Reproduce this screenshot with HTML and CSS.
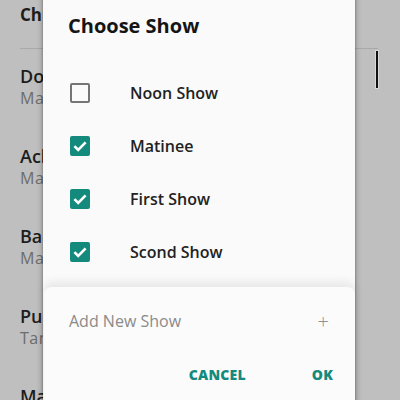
FILE: index.html
```html
<!DOCTYPE html>
<html>
<head>
<meta charset="utf-8">
<link rel="stylesheet" href="styles.css">
</head>
<body>
<div class="screen">
  <div class="bg">
    <div class="bg-header">
      <span class="bg-title">Ch</span>
    </div>
    <div class="bg-search"><span class="cursor"></span></div>
    <div class="bg-list">
      <div class="bg-item"><div class="bg-name">Do</div><div class="bg-sub">Mal</div></div>
      <div class="bg-item"><div class="bg-name">Ach</div><div class="bg-sub">Mal</div></div>
      <div class="bg-item"><div class="bg-name">Bah</div><div class="bg-sub">Mal</div></div>
      <div class="bg-item"><div class="bg-name">Pul</div><div class="bg-sub">Tam</div></div>
      <div class="bg-item"><div class="bg-name">Ma</div><div class="bg-sub">Mal</div></div>
    </div>
  </div>

  <div class="dialog">
    <div class="dialog-title">Choose Show</div>
    <div class="options">
      <div class="option">
        <span class="box"></span>
        <span class="label">Noon Show</span>
      </div>
      <div class="option">
        <span class="box checked"><svg viewBox="0 0 20 20" width="20" height="20"><path d="M4.4 10.1l3.8 3.8 7.4-7.6" fill="none" stroke="#fff" stroke-width="2.6"/></svg></span>
        <span class="label">Matinee</span>
      </div>
      <div class="option">
        <span class="box checked"><svg viewBox="0 0 20 20" width="20" height="20"><path d="M4.4 10.1l3.8 3.8 7.4-7.6" fill="none" stroke="#fff" stroke-width="2.6"/></svg></span>
        <span class="label">First Show</span>
      </div>
      <div class="option">
        <span class="box checked"><svg viewBox="0 0 20 20" width="20" height="20"><path d="M4.4 10.1l3.8 3.8 7.4-7.6" fill="none" stroke="#fff" stroke-width="2.6"/></svg></span>
        <span class="label">Scond Show</span>
      </div>
    </div>
    <div class="footer">
      <div class="add-row">
        <span class="add-text">Add New Show</span>
        <span class="plus">+</span>
      </div>
      <div class="actions">
        <span class="btn">CANCEL</span>
        <span class="btn">OK</span>
      </div>
    </div>
  </div>
</div>
</body>
</html>
```

FILE: styles.css
```css
html, body {
  margin: 0;
  padding: 0;
}
body {
  width: 400px;
  height: 400px;
  overflow: hidden;
  background: #bfbfbf;
  font-family: "Open Sans", "Noto Sans", sans-serif;
}
.screen {
  position: relative;
  width: 400px;
  height: 400px;
  overflow: hidden;
}
.bg {
  padding-left: 20px;
  color: #1c1c1c;
}
.bg-header {
  height: 49px;
  box-sizing: border-box;
  padding-top: 4px;
  border-bottom: 1px solid #a9a9a9;
  margin-right: 22px;
}
.bg-title {
  font-weight: 700;
  font-size: 17px;
  line-height: 22px;
}
.bg-search {
  height: 0;
  position: relative;
}
.cursor {
  position: absolute;
  left: 356px;
  top: 2px;
  width: 2px;
  height: 37px;
  background: #111;
  box-shadow: 0 0 0 1px #d8d8d8;
}
.bg-list {
  padding-top: 15px;
}
.bg-item {
  height: 80px;
}
.bg-name {
  font-weight: 600;
  font-size: 18px;
  line-height: 24px;
}
.bg-sub {
  font-size: 16px;
  line-height: 20px;
  letter-spacing: 0.5px;
  color: #6c6c6c;
}

.dialog {
  position: absolute;
  left: 43px;
  top: -20px;
  width: 312px;
  height: 440px;
  background: #fafafa;
  box-shadow: 0 0 6px rgba(0, 0, 0, 0.35), 0 0 2px rgba(0, 0, 0, 0.3);
  display: flex;
  flex-direction: column;
}
.dialog-title {
  padding: 32px 0 0 25px;
  font-size: 20px;
  line-height: 28px;
  font-weight: 700;
  color: #151515;
}
.options {
  padding-top: 26px;
}
.option {
  height: 53px;
  display: flex;
  align-items: center;
  padding-left: 27px;
}
.box {
  width: 20px;
  height: 20px;
  box-sizing: border-box;
  border: 2px solid #757575;
  border-radius: 2px;
  flex: none;
}
.box.checked {
  border: none;
  background: #148a7d;
  display: flex;
}
.label {
  margin-left: 40px;
  font-size: 16px;
  font-weight: 600;
  color: #222;
}
.footer {
  margin-top: 9px;
  margin-left: 1px;
  flex: 1;
  background: #fbfbfb;
  border-radius: 8px 8px 0 0;
  box-shadow: 0 -5px 10px rgba(0, 0, 0, 0.08);
}
.add-row {
  display: flex;
  justify-content: space-between;
  align-items: center;
  height: 24px;
  margin-top: 22px;
  padding: 0 26px 0 25px;
}
.add-text {
  font-size: 16px;
  color: #8a8a8a;
}
.plus {
  font-size: 20px;
  font-weight: 300;
  color: #909090;
}
.actions {
  display: flex;
  justify-content: flex-end;
  gap: 66px;
  padding-right: 22px;
  margin-top: 32px;
}
.btn {
  font-size: 14px;
  font-weight: 800;
  color: #148a7d;
  letter-spacing: 0.2px;
}
```
